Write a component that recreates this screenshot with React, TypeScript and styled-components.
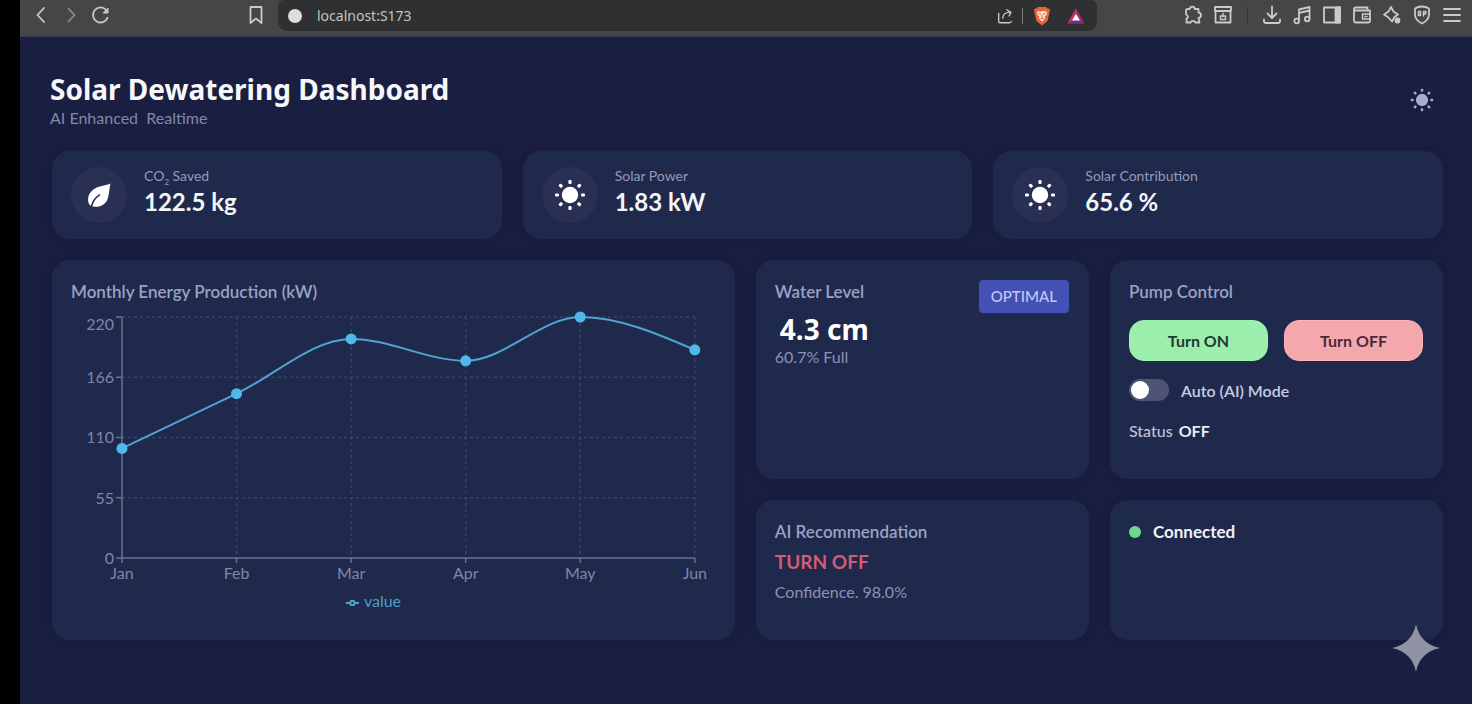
import React, { useState } from "react";
import styled, { createGlobalStyle } from "styled-components";

const SANS = `Lato, "Liberation Sans", sans-serif`;
const DISPLAY = `"Noto Sans", "Open Sans", sans-serif`;

const GlobalStyle = createGlobalStyle`
  *, *::before, *::after { box-sizing: border-box; }
  body { margin: 0; background: #1a1e40; color: #e6e8f2; font-family: ${SANS}; }
  h1, h2, p { margin: 0; }
  button { font-family: inherit; cursor: pointer; }
`;

const Screen = styled.div`
  display: flex;
  min-height: 100vh;
`;

const Edge = styled.div`
  flex: 0 0 20px;
  background: #000;
`;

const Window = styled.div`
  flex: 1;
  min-width: 0;
  display: flex;
  flex-direction: column;
`;

const BrowserBar = styled.header`
  display: flex;
  align-items: flex-start;
  height: 37px;
  padding: 0 5px 0 6px;
  background: #454647;
  border-bottom: 1px solid #3b3e50;
`;

const Tools = styled.div<{ $before?: number; $after?: number }>`
  display: flex;
  align-items: center;
  height: 30px;
  margin-left: ${(p) => p.$before ?? 0}px;
  margin-right: ${(p) => p.$after ?? 0}px;
`;

const ToolButton = styled.button<{ $dim?: boolean; $wide?: boolean }>`
  display: grid;
  place-items: center;
  width: ${(p) => (p.$wide ? 34 : 30)}px;
  height: 30px;
  padding: 0;
  border: 0;
  background: none;
  color: ${(p) => (p.$dim ? "#8a8b8c" : "#c9cacb")};
`;

const AddressBar = styled.div`
  flex: 1;
  min-width: 0;
  display: flex;
  align-items: center;
  height: 31px;
  padding: 0 4px 0 10px;
  border-radius: 6px 6px 9px 9px;
  background: #2e3031;
`;

const SiteDot = styled.span`
  flex: none;
  width: 14px;
  height: 14px;
  margin-right: 15px;
  border-radius: 50%;
  background: #dcdddd;
`;

const Address = styled.input`
  flex: 1;
  min-width: 0;
  padding: 0;
  border: 0;
  outline: 0;
  background: none;
  color: #c3c4c5;
  font: 14px/20px "Noto Sans", sans-serif;
`;

const Rule = styled.span<{ $dark?: boolean }>`
  width: 1px;
  height: 16px;
  margin: 0 ${(p) => (p.$dark ? 9 : 2)}px;
  background: ${(p) => (p.$dark ? "#323334" : "#77787a")};
`;

const Page = styled.main`
  flex: 1;
  padding: 34px 29px 64px 30px;
`;

const PageHeader = styled.div`
  display: flex;
  justify-content: space-between;
  align-items: center;
  margin-bottom: 23px;
  padding-right: 6px;
`;

const Title = styled.h1`
  font: 700 28px/36px ${DISPLAY};
  color: #f7f7fa;
`;

const Subtitle = styled.p`
  font-size: 16px;
  line-height: 21px;
  color: #8388ab;
  white-space: pre;
`;

const ThemeButton = styled.button`
  display: grid;
  place-items: center;
  width: 30px;
  height: 30px;
  padding: 0;
  border: 0;
  background: none;
  color: #a9acd0;
`;

const Stats = styled.section`
  display: grid;
  grid-template-columns: repeat(3, 1fr);
  gap: 21px;
  margin-bottom: 21px;
  padding-left: 2px;
`;

const Panels = styled.section`
  display: grid;
  grid-template-columns: 41fr 20fr 20fr;
  grid-template-rows: minmax(219px, auto) minmax(139px, auto);
  gap: 21px;
  padding-left: 2px;
`;

const Card = styled.article<{ $tall?: boolean }>`
  min-width: 0;
  padding: 20px 20px 20px 19px;
  border-radius: 18px;
  background: #1f294c;
  box-shadow: 0 0 10px rgba(20, 24, 56, 0.5);
  grid-row: ${(p) => (p.$tall ? "span 2" : "auto")};
`;

const StatCard = styled(Card)`
  display: flex;
  gap: 17px;
  padding: 16px 19px;
`;

const IconDisc = styled.span`
  flex: none;
  display: grid;
  place-items: center;
  width: 56px;
  height: 56px;
  border-radius: 50%;
  background: #293053;
  color: #fff;
`;

const StatLabel = styled.p`
  font-size: 14px;
  line-height: 18px;
  color: #949abb;
  sub { font-size: 8px; line-height: 0; }
`;

const StatValue = styled.p`
  font-size: 24px;
  font-weight: 700;
  line-height: 33px;
  color: #f4f5f8;
`;

const CardTitle = styled.h2`
  font-size: 17px;
  font-weight: 600;
  line-height: 24px;
  color: #9ba2c4;
`;

const CardHead = styled.div`
  display: flex;
  justify-content: space-between;
  align-items: flex-start;
`;

const Badge = styled.span`
  padding: 0 12px;
  border-radius: 4px;
  background: #4350b4;
  color: #c3c9ee;
  font-size: 15px;
  font-weight: 500;
  line-height: 33px;
`;

const Level = styled.p`
  padding-left: 5px;
  font: 700 28px/32px ${DISPLAY};
  color: #fff;
`;

const Note = styled.p`
  font-size: 16px;
  line-height: 24px;
  color: #8c92b4;
`;

const Advice = styled.p`
  font-size: 19px;
  font-weight: 700;
  line-height: 36px;
  color: #d65a76;
`;

const PumpButtons = styled.div`
  display: grid;
  grid-template-columns: 1fr 1fr;
  gap: 16px;
  margin: 16px 0 18px;
`;

const PumpButton = styled.button<{ $tone: "on" | "off" }>`
  height: 41px;
  padding: 0;
  border: 1px solid ${(p) => (p.$tone === "on" ? "#9df5b0" : "#ffb3bb")};
  border-radius: 15px;
  background: ${(p) => (p.$tone === "on" ? "#9ceeac" : "#f5a7ae")};
  color: ${(p) => (p.$tone === "on" ? "#203b36" : "#4a2a3a")};
  font-size: 16px;
  font-weight: 700;
`;

const ToggleRow = styled.label`
  display: flex;
  align-items: center;
  gap: 12px;
  height: 22px;
  margin-bottom: 18px;
  color: #c9cde2;
  font-size: 16px;
  font-weight: 600;
`;

const Toggle = styled.input`
  appearance: none;
  display: flex;
  align-items: center;
  width: 40px;
  height: 22px;
  margin: 0;
  padding: 0 2px;
  border-radius: 11px;
  background: #4e5474;
  cursor: pointer;
  &::before {
    content: "";
    width: 18px;
    height: 18px;
    border-radius: 50%;
    background: #fff;
  }
  &:checked { justify-content: flex-end; background: #4350b4; }
`;

const Status = styled.p`
  font-size: 16px;
  font-weight: 500;
  line-height: 24px;
  color: #c0c4da;
  strong { margin-left: 2px; color: #e8eaf3; font-weight: 700; }
`;

const Connection = styled.p`
  display: flex;
  align-items: center;
  gap: 12px;
  font-size: 17px;
  font-weight: 700;
  line-height: 24px;
  color: #f0f1f6;
  &::before {
    content: "";
    width: 12px;
    height: 12px;
    border-radius: 50%;
    background: #6cd98a;
  }
`;

const ChartSvg = styled.svg`
  display: block;
  width: 100%;
  height: auto;
  font-family: ${SANS};
  font-size: 16px;
  fill: #7f86a8;
`;

const Sparkle = styled.svg`
  position: fixed;
  right: 32px;
  bottom: 32px;
  width: 48px;
  height: 48px;
  fill: #9092a6;
`;

const stroke = {
  fill: "none",
  stroke: "currentColor",
  strokeWidth: 1.8,
  strokeLinecap: "round" as const,
  strokeLinejoin: "round" as const,
};

function Glyph({ children, size = 20 }: { children: React.ReactNode; size?: number }) {
  return (
    <svg width={size} height={size} viewBox="0 0 20 20" aria-hidden="true" {...stroke}>
      {children}
    </svg>
  );
}

function Sun({ size }: { size: number }) {
  const angles = [0, 45, 90, 135, 180, 225, 270, 315];
  return (
    <svg width={size} height={size} viewBox="0 0 32 32" fill="currentColor" aria-hidden="true">
      <circle cx="16" cy="16" r="8.2" />
      {angles.map((a) => (
        <rect key={a} x="14.400" y="1" width="3.200" height="4" rx="1.100" transform={`rotate(${a} 16 16)`} />
      ))}
    </svg>
  );
}

function Leaf() {
  return (
    <svg width="24" height="24" viewBox="0 0 24 24" fill="#fff" aria-hidden="true">
      <path d="M23.500.5C19 2.500 13 2.500 8 5.500 3 8.500.5 13 1.200 18.500 1.600 21 3 23 5.500 23.500 11 24.500 17 23 20 17.500 22.500 12.500 22 6 23.500.5Z" />
      <path d="M4.500 23.500C5.500 18.500 8.500 14.500 12.500 11.800" fill="none" stroke="#293053" strokeWidth="1.500" strokeLinecap="round" />
    </svg>
  );
}

const DATA = [
  { month: "Jan", value: 100 },
  { month: "Feb", value: 150 },
  { month: "Mar", value: 200 },
  { month: "Apr", value: 180 },
  { month: "May", value: 220 },
  { month: "Jun", value: 190 },
];
const TICKS = [
  { value: 0, label: "0" },
  { value: 55, label: "55" },
  { value: 110, label: "110" },
  { value: 165, label: "166" },
  { value: 220, label: "220" },
];
const PLOT = { left: 51, right: 624, top: 13, bottom: 254 };

const xAt = (i: number) => PLOT.left + ((PLOT.right - PLOT.left) * i) / (DATA.length - 1);
const yAt = (v: number) => PLOT.bottom - ((PLOT.bottom - PLOT.top) * v) / 220;

/* Monotone cubic interpolation, so the line never overshoots a point. */
function monotonePath(points: [number, number][]) {
  const last = points.length - 1;
  const slope = points.slice(1).map(([x, y], i) => (y - points[i][1]) / (x - points[i][0]));
  const tangent = points.map((_, i) => {
    if (i === 0 || i === last) return 0;
    const a = slope[i - 1];
    const b = slope[i];
    if (a * b <= 0) return 0;
    return 2 * Math.sign(a) * Math.min(Math.abs(a), Math.abs(b), Math.abs(a + b) / 4);
  });
  tangent[0] = (3 * slope[0] - tangent[1]) / 2;
  tangent[last] = (3 * slope[last - 1] - tangent[last - 1]) / 2;
  return points.reduce((d, [x, y], i) => {
    if (i === 0) return `M${x},${y}`;
    const [px, py] = points[i - 1];
    const h = (x - px) / 3;
    return `${d}C${px + h},${py + h * tangent[i - 1]} ${x - h},${y - h * tangent[i]} ${x},${y}`;
  }, "");
}

function EnergyChart() {
  const points = DATA.map((d, i): [number, number] => [xAt(i), yAt(d.value)]);
  return (
    <ChartSvg viewBox="0 0 644 316" role="img" aria-label="Monthly energy production in kilowatts">
      <g stroke="#38416a" strokeWidth="1.500" strokeDasharray="3 3">
        {TICKS.slice(1).map((t) => (
          <line key={t.value} x1={PLOT.left} x2={PLOT.right} y1={yAt(t.value)} y2={yAt(t.value)} />
        ))}
        {DATA.slice(1).map((d, i) => (
          <line key={d.month} x1={xAt(i + 1)} x2={xAt(i + 1)} y1={PLOT.top} y2={PLOT.bottom} />
        ))}
      </g>
      <g stroke="#6a7196" strokeWidth="1.500">
        <line x1={PLOT.left} x2={PLOT.left} y1={PLOT.top} y2={PLOT.bottom + 5} />
        <line x1={PLOT.left - 6} x2={PLOT.right} y1={PLOT.bottom} y2={PLOT.bottom} />
        {TICKS.slice(1).map((t) => (
          <line key={t.value} x1={PLOT.left - 6} x2={PLOT.left} y1={yAt(t.value)} y2={yAt(t.value)} />
        ))}
        {DATA.slice(1).map((d, i) => (
          <line key={d.month} x1={xAt(i + 1)} x2={xAt(i + 1)} y1={PLOT.bottom} y2={PLOT.bottom + 5} />
        ))}
      </g>
      {TICKS.map((t) => (
        <text key={t.value} x={PLOT.left - 8} y={yAt(t.value) + (t.value === 220 ? 13 : 6)} textAnchor="end">
          {t.label}
        </text>
      ))}
      {DATA.map((d, i) => (
        <text key={d.month} x={xAt(i)} y={PLOT.bottom + 21} textAnchor="middle">
          {d.month}
        </text>
      ))}
      <path d={monotonePath(points)} fill="none" stroke="#50a4d0" strokeWidth="2" />
      {points.map(([x, y]) => (
        <circle key={x} cx={x} cy={y} r="5.500" fill="#4fb9ea" />
      ))}
      <g stroke="#4ba6c9" strokeWidth="2" fill="none">
        <path d="M275 299h4M284 299h4" />
        <circle cx="281.500" cy="299" r="2.200" />
      </g>
      <text x="293" y="303" fill="#4f9fc6">
        value
      </text>
    </ChartSvg>
  );
}

function BrowserChrome() {
  return (
    <BrowserBar>
      <Tools $after={125}>
        <ToolButton aria-label="Back">
          <Glyph><path d="M13 3 6.500 10l6.500 7" /></Glyph>
        </ToolButton>
        <ToolButton aria-label="Forward" $dim>
          <Glyph><path d="m7.500 3.500 6 6.500-6 6.500" /></Glyph>
        </ToolButton>
        <ToolButton aria-label="Reload">
          <Glyph>
            <path d="M16.500 12.800A7.500 7.500 0 1 1 15 4.800" />
            <path d="M17 3.500v4.500h-4.500Z" fill="currentColor" strokeWidth="1" />
          </Glyph>
        </ToolButton>
      </Tools>
      <Tools $after={7}>
        <ToolButton aria-label="Bookmark this page">
          <Glyph><path d="M4.500 2h11v16L10 13.500 4.500 18Z" /></Glyph>
        </ToolButton>
      </Tools>
      <AddressBar>
        <SiteDot />
        <Address aria-label="Address" defaultValue="localnost:S173" />
        <Tools>
          <ToolButton aria-label="Share">
            <Glyph size={18}>
              <path d="M3 7v9q0 1.500 1.500 1.500H15q1.500 0 2-1.500M7.500 12.500c0-4 2.500-6.500 7.500-6.500M12 3l4.500 3-2 4" strokeWidth="1.500" />
            </Glyph>
          </ToolButton>
          <Rule />
          <ToolButton aria-label="Shields" $wide>
            <svg width="18" height="20" viewBox="0 0 18 20" aria-hidden="true">
              <path d="M5 1h8l1.500 1.500L17 3l-.5 3.500L14.500 15 9 19.500 3.500 15 1.500 6.500 1 3l2.500-.5Z" fill="#e8663a" />
              <path d="M4.500 5 7 5.500 9 5l2 0 2.500.5L14 8l-2.500 3 .5 1.500L9 15.500 6 12.500 6.500 11 4 8Z" fill="#fbe6dc" />
              <path d="m5.500 7.500 2.500 1M12.500 7.500l-2.500 1M9 8.500V12M7.500 12.500h3" stroke="#e8663a" strokeWidth="1" fill="none" />
            </svg>
          </ToolButton>
          <ToolButton aria-label="Rewards" $wide>
            <svg width="18" height="16" viewBox="0 0 18 16" aria-hidden="true">
              <path d="M9 .5 17.500 15.500H.5Z" fill="#a52a6c" />
              <path d="M9 .5.5 15.500 9 11Z" fill="#c6325e" />
              <path d="M.5 15.500H17.500L9 11Z" fill="#6b2f8e" />
              <path d="M9 6 13 12.500H5Z" fill="#fff" />
            </svg>
          </ToolButton>
        </Tools>
      </AddressBar>
      <Tools $before={81}>
        <ToolButton aria-label="Extensions">
          <Glyph>
            <path d="M4.500 4H6.800C6.800.8 11.700.8 11.700 4H15.500V7.700C18.800 8 18.800 12.600 15.500 13L16.500 17.500H12.300C11.500 15.300 8.500 15.300 7.700 17.500H3.500V13.500C5.500 12.500 5.500 10.500 3 9.500V5.500Q3 4 4.500 4Z" />
          </Glyph>
        </ToolButton>
        <ToolButton aria-label="Archive">
          <Glyph>
            <path d="M2 2h16v4H2ZM2.500 6v11.500h15V6" />
            <path d="M10 8.500v3M7.500 11h5v3.500h-5Z" strokeWidth="1.500" />
          </Glyph>
        </ToolButton>
        <Rule $dark />
        <ToolButton aria-label="Downloads">
          <Glyph><path d="M10 1.500v11M5.500 8.500l4.500 4.500 4.500-4.500M2 14.500V16q0 2 2 2h12q2 0 2-2v-1.500" /></Glyph>
        </ToolButton>
        <ToolButton aria-label="Media">
          <Glyph>
            <path d="M7 15.500V4.500L17.500 2v11.500M7 8l10.500-2.500" />
            <circle cx="4.700" cy="16" r="2.300" />
            <circle cx="15.200" cy="14" r="2.300" />
          </Glyph>
        </ToolButton>
        <ToolButton aria-label="Sidebar">
          <Glyph>
            <path d="M2 2.500h16v15H2Z" />
            <path d="M13.500 2.500H18v15h-4.500Z" fill="currentColor" />
          </Glyph>
        </ToolButton>
        <ToolButton aria-label="Wallet">
          <Glyph>
            <path d="M15.500 5V2.500h-12Q2 2.500 2 4v12q0 1.500 1.500 1.500h13q1.500 0 1.500-1.500V5.500H3" />
            <path d="M18 9h-7.500v5H18M13 11.500h2" strokeWidth="1.500" />
          </Glyph>
        </ToolButton>
        <ToolButton aria-label="Assistant">
          <Glyph>
            <path d="M9 2 11.500 6.500 16 9.500 12.500 12 10 16.500 6.500 12.500 2 9.500 6.500 6.500Z" />
            <circle cx="15.500" cy="15.500" r="2" fill="currentColor" />
          </Glyph>
        </ToolButton>
        <ToolButton aria-label="VPN">
          <Glyph>
            <path d="M10 1.500q4 0 7 2v6.500q-.5 5.500-7 8.500-6.500-3-7-8.500V3.500q3-2 7-2Z" />
            <path d="M6.500 6.500v4h2v-4ZM11.500 11V6.500h2.300v2.300h-2" strokeWidth="1.500" />
          </Glyph>
        </ToolButton>
        <ToolButton aria-label="Menu">
          <Glyph><path d="M2 4h16M2 10h16M2 16h16" /></Glyph>
        </ToolButton>
      </Tools>
    </BrowserBar>
  );
}

export default function App() {
  const [auto, setAuto] = useState(false);
  const [pump, setPump] = useState("OFF");
  return (
    <Screen>
      <GlobalStyle />
      <Edge />
      <Window>
        <BrowserChrome />
        <Page>
          <PageHeader>
            <div>
              <Title>Solar Dewatering Dashboard</Title>
              <Subtitle>{"AI Enhanced  Realtime"}</Subtitle>
            </div>
            <ThemeButton aria-label="Toggle theme">
              <Sun size={24} />
            </ThemeButton>
          </PageHeader>
          <Stats>
            <StatCard>
              <IconDisc><Leaf /></IconDisc>
              <div>
                <StatLabel>CO<sub>2</sub> Saved</StatLabel>
                <StatValue>122.5 kg</StatValue>
              </div>
            </StatCard>
            <StatCard>
              <IconDisc><Sun size={32} /></IconDisc>
              <div>
                <StatLabel>Solar Power</StatLabel>
                <StatValue>1.83 kW</StatValue>
              </div>
            </StatCard>
            <StatCard>
              <IconDisc><Sun size={32} /></IconDisc>
              <div>
                <StatLabel>Solar Contribution</StatLabel>
                <StatValue>65.6 %</StatValue>
              </div>
            </StatCard>
          </Stats>
          <Panels>
            <Card $tall>
              <CardTitle>Monthly Energy Production (kW)</CardTitle>
              <EnergyChart />
            </Card>
            <Card>
              <CardHead>
                <CardTitle>Water Level</CardTitle>
                <Badge>OPTIMAL</Badge>
              </CardHead>
              <Level>4.3 cm</Level>
              <Note>60.7% Full</Note>
            </Card>
            <Card>
              <CardTitle>Pump Control</CardTitle>
              <PumpButtons>
                <PumpButton $tone="on" onClick={() => setPump("ON")}>Turn ON</PumpButton>
                <PumpButton $tone="off" onClick={() => setPump("OFF")}>Turn OFF</PumpButton>
              </PumpButtons>
              <ToggleRow>
                <Toggle type="checkbox" checked={auto} onChange={() => setAuto(!auto)} />
                Auto (AI) Mode
              </ToggleRow>
              <Status>Status <strong>{pump}</strong></Status>
            </Card>
            <Card>
              <CardTitle>AI Recommendation</CardTitle>
              <Advice>TURN OFF</Advice>
              <Note>Confidence. 98.0%</Note>
            </Card>
            <Card>
              <Connection>Connected</Connection>
            </Card>
          </Panels>
        </Page>
      </Window>
      <Sparkle viewBox="0 0 48 48" aria-hidden="true">
        <path d="M24 0C26.500 13 35 21.500 48 24 35 26.500 26.500 35 24 48 21.500 35 13 26.500 0 24 13 21.500 21.500 13 24 0Z" />
      </Sparkle>
    </Screen>
  );
}
